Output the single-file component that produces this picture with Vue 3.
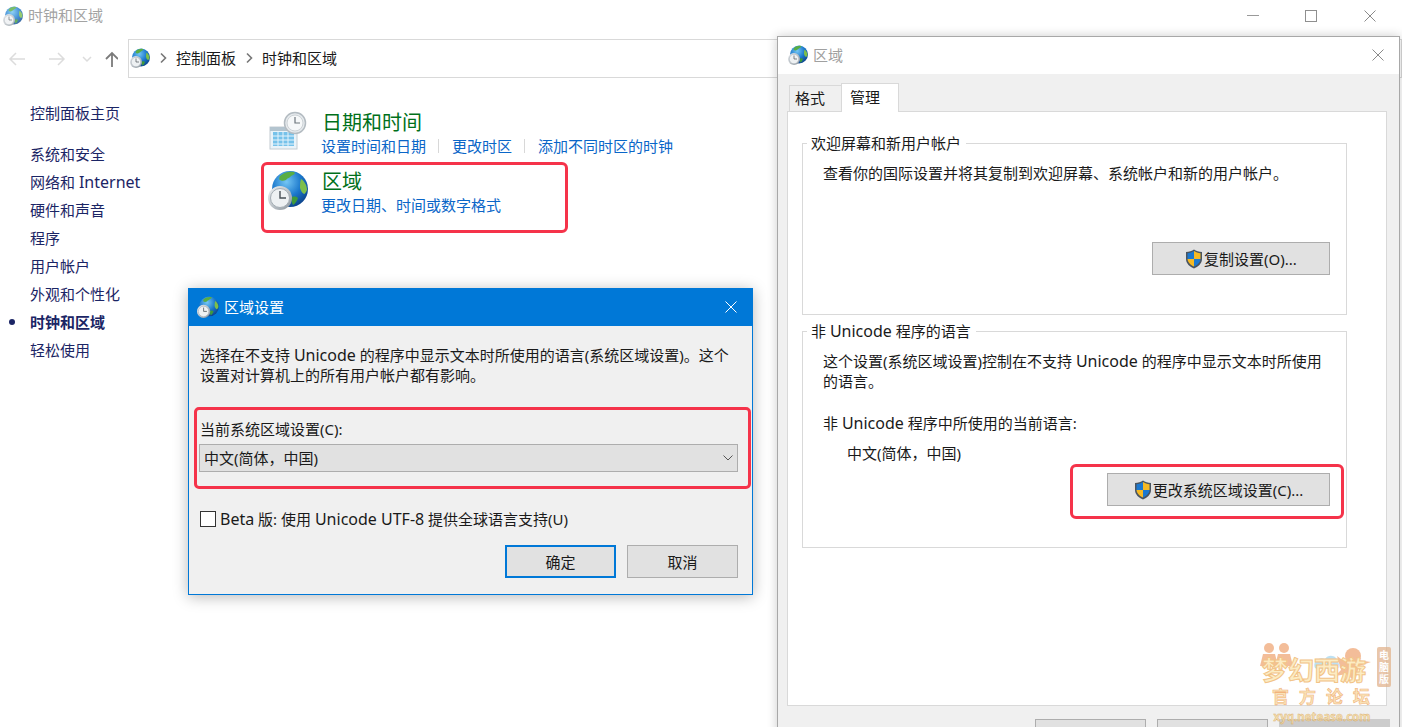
<template>
  <div class="desktop">
    <!-- shared icons -->
    <svg class="defs" width="0" height="0">
      <defs>
        <radialGradient id="sea" cx="40%" cy="30%" r="75%">
          <stop offset="0" stop-color="#74c6f4" />
          <stop offset="0.55" stop-color="#1b78cc" />
          <stop offset="1" stop-color="#0b3f86" />
        </radialGradient>
        <linearGradient id="rim" x1="0" y1="0" x2="1" y2="1">
          <stop offset="0" stop-color="#f2f4f6" />
          <stop offset="1" stop-color="#8a949c" />
        </linearGradient>
        <symbol id="globe" viewBox="0 0 40 40">
          <circle cx="22" cy="19" r="18" fill="url(#sea)" />
          <path d="M12 6c4-4 10-5 14-4 2 1 0 3-3 4-1 2-4 2-5 4-2 1-5 1-6 0-1 0-1-2 0-4z" fill="#58ad44" />
          <path d="M33 9c3 2 6 6 6 11-1 2-2 4-3 4-2-1-3-3-4-6 0-3 0-6 1-9z" fill="#7dbf4a" />
          <path d="M24 27c3-1 5 0 6 1-1 3-3 6-5 7-1-2-2-5-1-8z" fill="#3f9a3a" />
          <circle cx="12" cy="28" r="12" fill="url(#rim)" />
          <circle cx="12" cy="28" r="9.500" fill="#eef1f3" stroke="#a4adb4" />
          <path d="M12 21v7h6" fill="none" stroke="#4a5258" stroke-width="1.400" />
        </symbol>
        <symbol id="calendar" viewBox="0 0 40 40">
          <rect x="2" y="16" width="27" height="22" fill="#e9f3f9" stroke="#c3ccd2" />
          <rect x="2" y="16" width="27" height="4" fill="#b3c4cf" />
          <path d="M5 21h21v14H5z" fill="#76c2ea" />
          <path d="M5 25h21M5 29h21M5 33h21M10 21v14M15 21v14M20 21v14" stroke="#e4f3fb" stroke-width="1" />
          <circle cx="27" cy="12" r="10.500" fill="#e6eaed" stroke="#b3bbc1" stroke-width="1.500" />
          <circle cx="27" cy="12" r="8" fill="#f6f8f9" stroke="#ccd2d6" />
          <path d="M27 6v6h5" fill="none" stroke="#6d767c" stroke-width="1.200" />
        </symbol>
        <symbol id="shield" viewBox="0 0 18 20">
          <path d="M9 .5c2 1.600 5 2.500 8 2.500v7c0 4.500-4 8-8 9.500C5 18 1 14.500 1 10V3c3 0 6-.9 8-2.500z" fill="#4a5560" />
          <path d="M9 2v8H2.500V4.200C5 4 7.200 3.200 9 2z" fill="#1b78d0" />
          <path d="M9 2c1.800 1.200 4 2 6.500 2.200V10H9z" fill="#f6b922" />
          <path d="M9 10H2.500c.3 3.500 3.200 6 6.500 7.500z" fill="#f6b922" />
          <path d="M9 10h6.500c-.3 3.500-3.200 6-6.500 7.500z" fill="#1b78d0" />
        </symbol>
        <symbol id="cross" viewBox="0 0 12 12">
          <path d="M.5.5l11 11M11.500.5l-11 11" fill="none" stroke="currentColor" stroke-width="1" />
        </symbol>
        <symbol id="chevron" viewBox="0 0 8 12">
          <path d="M2 1.500L6.500 6 2 10.500" fill="none" stroke="#777" stroke-width="1.600" />
        </symbol>
      </defs>
    </svg>

    <!-- control panel window -->
    <div class="main-window">
      <div class="main-title">
        <svg class="title-icon faded"><use href="#globe" /></svg>
        <span class="title-text">时钟和区域</span>
        <div class="win-controls">
          <i class="minimize"></i>
          <i class="maximize"></i>
          <svg class="win-close"><use href="#cross" /></svg>
        </div>
      </div>

      <div class="nav-row">
        <svg class="nav-arrows" width="118" height="20" viewBox="0 0 118 20">
          <path d="M25 10H10M16 4l-6 6 6 6" fill="none" stroke="#dcdcdc" stroke-width="1.500" />
          <path d="M49 10h15M58 4l6 6-6 6" fill="none" stroke="#dcdcdc" stroke-width="1.500" />
          <path d="M83 8l4 4 4-4" fill="none" stroke="#dcdcdc" stroke-width="1.500" />
          <path d="M112 18V4M106 10l6-6 6 6" fill="none" stroke="#7b7b7b" stroke-width="1.800" />
        </svg>
        <div class="address">
          <svg class="title-icon"><use href="#globe" /></svg>
          <svg class="crumb-sep"><use href="#chevron" /></svg>
          <span>控制面板</span>
          <svg class="crumb-sep"><use href="#chevron" /></svg>
          <span>时钟和区域</span>
        </div>
      </div>

      <div class="main-body">
        <nav class="sidebar">
          <a class="home">控制面板主页</a>
          <a>系统和安全</a>
          <a>网络和 <span class="lat">Internet</span></a>
          <a>硬件和声音</a>
          <a>程序</a>
          <a>用户帐户</a>
          <a>外观和个性化</a>
          <a class="current">时钟和区域</a>
          <a>轻松使用</a>
        </nav>

        <div class="categories">
          <div class="category first">
            <svg class="cat-icon"><use href="#calendar" /></svg>
            <div>
              <h2>日期和时间</h2>
              <div class="links">
                <a>设置时间和日期</a><b></b><a>更改时区</a><b></b><a>添加不同时区的时钟</a>
              </div>
            </div>
          </div>
          <div class="category marked">
            <svg class="cat-icon"><use href="#globe" /></svg>
            <div>
              <h2>区域</h2>
              <div class="links"><a>更改日期、时间或数字格式</a></div>
            </div>
          </div>
        </div>
      </div>
    </div>

    <!-- 区域设置 dialog -->
    <div class="settings-dialog">
      <div class="settings-title">
        <svg class="small-icon"><use href="#globe" /></svg>
        <span>区域设置</span>
        <svg class="settings-close"><use href="#cross" /></svg>
      </div>
      <div class="settings-body">
        <div class="intro">
          <span class="ln">选择在不支持 <span class="lat">Unicode</span> 的程序中显示文本时所使用的语言(系统区域设置)。这个</span>
          <span class="ln">设置对计算机上的所有用户帐户都有影响。</span>
        </div>
        <div class="locale-box">
          <label class="ln">当前系统区域设置(C):</label>
          <div class="combo">
            <span>中文(简体，中国)</span>
            <svg width="10" height="6" viewBox="0 0 10 6"><path d="M.5.500L5 5 9.500.500" fill="none" stroke="#555" /></svg>
          </div>
        </div>
        <div class="beta-row">
          <span class="checkbox"></span>
          <span><span class="lat">Beta</span> 版: 使用 <span class="lat">Unicode UTF-8</span> 提供全球语言支持(U)</span>
        </div>
        <div class="dialog-buttons">
          <button class="btn default">确定</button>
          <button class="btn">取消</button>
        </div>
      </div>
    </div>

    <!-- 区域 window -->
    <div class="region-window">
      <div class="region-title">
        <svg class="small-icon"><use href="#globe" /></svg>
        <span>区域</span>
        <svg class="region-close"><use href="#cross" /></svg>
      </div>
      <div class="region-body">
        <div class="tabs">
          <span class="tab">格式</span>
          <span class="tab active">管理</span>
        </div>
        <div class="panel">
          <fieldset class="group welcome">
            <legend>欢迎屏幕和新用户帐户</legend>
            <span class="ln">查看你的国际设置并将其复制到欢迎屏幕、系统帐户和新的用户帐户。</span>
            <div class="group-action">
              <button class="btn shield-btn copy">
                <svg class="shield"><use href="#shield" /></svg>复制设置(O)...
              </button>
            </div>
          </fieldset>
          <fieldset class="group non-unicode">
            <legend>非 <span class="lat">Unicode</span> 程序的语言</legend>
            <span class="ln">这个设置(系统区域设置)控制在不支持 <span class="lat">Unicode</span> 的程序中显示文本时所使用</span>
            <span class="ln">的语言。</span>
            <span class="ln current-label">非 <span class="lat">Unicode</span> 程序中所使用的当前语言:</span>
            <span class="ln current-value">中文(简体，中国)</span>
            <div class="group-action marked-action">
              <button class="btn shield-btn change">
                <svg class="shield"><use href="#shield" /></svg>更改系统区域设置(C)...
              </button>
            </div>
          </fieldset>
        </div>
        <div class="footer-buttons">
          <button class="btn"></button>
          <button class="btn"></button>
          <button class="btn disabled"></button>
        </div>
      </div>
    </div>

    <!-- forum watermark -->
    <div class="watermark">
      <svg class="wm-art" width="118" height="44" viewBox="0 0 118 44">
        <g fill="#f0a878">
          <circle cx="12" cy="6" r="5" />
          <path d="M6 12h12l3 12H3z" />
          <circle cx="27" cy="6" r="5" />
          <path d="M21 12h12l3 12H18z" />
          <circle cx="96" cy="14" r="8" />
          <path d="M88 20l-8-6 4 14-6 6 12-2 8 8 4-16 12-4-14-2z" />
        </g>
        <path d="M58 26c-3-6 4-12 10-9 4-6 13-3 13 4 3 1 2 6-2 6H60z" fill="#a8d8f0" />
      </svg>
      <div class="wm-top">
        <span class="wm-name">梦幻西游</span>
        <span class="wm-tag">电脑版</span>
      </div>
      <div class="wm-sub">官方论坛</div>
      <div class="wm-url">xyq.netease.com</div>
    </div>
  </div>
</template>

<script setup>
</script>

<style>
html, body {
  margin: 0;
  overflow: hidden;
  background: #fff;
}
</style>

<style scoped>
.desktop {
  position: relative;
  width: 1402px;
  height: 727px;
  overflow: hidden;
  background: #fff;
  font-family: "Noto Sans", "Noto Sans CJK SC", sans-serif;
  font-size: 15px;
  line-height: 20px;
  color: #1a1a1a;
}
.defs {
  position: absolute;
}
.ln {
  display: block;
  height: 20px;
  white-space: nowrap;
}
.lat {
  font-size: 16px;
}

/* main window */
.main-title {
  display: flex;
  align-items: center;
  height: 31px;
  padding-left: 3px;
  gap: 5px;
  color: #a3a3a3;
}
.title-text {
  margin-bottom: 2px;
}
.title-icon {
  width: 20px;
  height: 20px;
  flex: none;
}
.faded {
  opacity: 0.8;
}
.win-controls {
  margin-left: auto;
  display: flex;
  align-items: center;
  height: 31px;
  color: #8a8a8a;
}
.minimize {
  width: 12px;
  height: 1px;
  background: #9a9a9a;
  margin-right: 46px;
}
.maximize {
  width: 10px;
  height: 10px;
  border: 1px solid #8f8f8f;
  margin-right: 47px;
}
.win-close {
  width: 12px;
  height: 12px;
  margin-right: 26px;
}
.nav-row {
  display: flex;
  align-items: center;
  margin-top: 8px;
  height: 39px;
}
.nav-arrows {
  flex: none;
  width: 118px;
  margin-right: 10px;
}
.address {
  flex: 1;
  height: 36px;
  display: flex;
  align-items: center;
  gap: 9px;
  padding: 0 0 1px 1px;
  border: 1px solid #d9d9d9;
  color: #1a1a1a;
}
.crumb-sep {
  width: 8px;
  height: 12px;
  flex: none;
}
.main-body {
  display: flex;
}
.sidebar {
  width: 261px;
  flex: none;
  box-sizing: border-box;
  padding: 21px 0 0 30px;
  display: flex;
  flex-direction: column;
  color: #1b2565;
}
.sidebar a {
  height: 28px;
  line-height: 28px;
  position: relative;
}
.sidebar .home {
  margin-bottom: 13px;
}
.sidebar .current {
  font-weight: 700;
}
.sidebar .current::before {
  content: "";
  position: absolute;
  left: -21px;
  top: 11px;
  width: 6px;
  height: 6px;
  border-radius: 50%;
  background: #1b2565;
}
.categories {
  padding-top: 33px;
}
.category {
  display: flex;
  gap: 13px;
  padding-left: 7px;
}
.category.first {
  height: 51px;
}
.cat-icon {
  width: 40px;
  height: 40px;
  flex: none;
}
.category h2 {
  margin: 0 0 0 1px;
  font-size: 20px;
  font-weight: 400;
  line-height: 24px;
  color: #00701a;
}
.links {
  display: flex;
  align-items: center;
  height: 22px;
  color: #0a66c8;
  line-height: 22px;
}
.links b {
  width: 1px;
  height: 14px;
  margin: 0 13px 0 12px;
  background: #d8d8d8;
}
.category.marked {
  width: 307px;
  height: 71px;
  box-sizing: border-box;
  padding: 5px 0 0 4px;
  border: 3px solid #f5334a;
  border-radius: 6px;
}

/* settings dialog */
.settings-dialog {
  position: absolute;
  left: 188px;
  top: 288px;
  width: 563px;
  height: 305px;
  border: 1px solid #0078d7;
  background: #f0f0f0;
  box-shadow: 0 2px 14px rgba(0, 0, 0, 0.28);
}
.settings-title {
  height: 36px;
  display: flex;
  align-items: center;
  padding: 0 0 1px 8px;
  gap: 5px;
  background: #0078d7;
  color: #fff;
}
.small-icon {
  width: 22px;
  height: 22px;
  flex: none;
}
.settings-close {
  width: 12px;
  height: 12px;
  margin-left: auto;
  margin-right: 15px;
  color: #fff;
}
.settings-body {
  padding-top: 19px;
}
.intro {
  margin-left: 11px;
}
.locale-box {
  margin: 22px 1px 0 5px;
  height: 82px;
  box-sizing: border-box;
  padding: 9px 10px 0 2px;
  border: 3px solid #f5334a;
  border-radius: 5px;
}
.locale-box label {
  height: 25px;
  margin-left: 1px;
}
.combo {
  height: 26px;
  padding: 0 4px 0 4px;
  display: flex;
  align-items: center;
  justify-content: space-between;
  border: 1px solid #adadad;
  background: #e1e1e1;
}
.beta-row {
  display: flex;
  align-items: center;
  gap: 4px;
  margin: 18px 0 0 11px;
  height: 24px;
}
.checkbox {
  width: 14px;
  height: 14px;
  border: 1px solid #333;
  background: #fff;
  flex: none;
}
.dialog-buttons {
  display: flex;
  justify-content: flex-end;
  gap: 11px;
  margin: 14px 14px 0 0;
}
.btn {
  width: 111px;
  height: 33px;
  box-sizing: border-box;
  border: 1px solid #adadad;
  background: #e1e1e1;
  font: inherit;
  color: #1a1a1a;
  padding: 0;
}
.btn.default {
  border: 2px solid #0078d7;
}

/* region window */
.region-window {
  position: absolute;
  left: 777px;
  top: 36px;
  width: 621px;
  height: 700px;
  border: 1px solid #a8a8a8;
  background: #f0f0f0;
  box-shadow: 0 0 10px rgba(0, 0, 0, 0.2);
}
.region-title {
  height: 35px;
  display: flex;
  align-items: center;
  gap: 5px;
  padding: 0 0 2px 10px;
  background: #fff;
  color: #a0a0a0;
}
.region-title .small-icon {
  width: 20px;
  height: 20px;
}
.region-close {
  width: 12px;
  height: 12px;
  margin-left: auto;
  margin-right: 15px;
  color: #8a8a8a;
}
.tabs {
  display: flex;
  align-items: flex-end;
  height: 37px;
  padding-left: 11px;
}
.tab {
  box-sizing: border-box;
  width: 53px;
  height: 26px;
  padding-left: 5px;
  border: 1px solid #d9d9d9;
  border-bottom: 0;
  background: #f0f0f0;
  line-height: 25px;
}
.tab.active {
  position: relative;
  width: 58px;
  height: 29px;
  padding-left: 8px;
  margin-left: -1px;
  margin-bottom: -1px;
  background: #fff;
  line-height: 26px;
}
.panel {
  box-sizing: border-box;
  width: 600px;
  height: 595px;
  margin-left: 9px;
  padding: 21px 0 0 14px;
  border: 1px solid #d9d9d9;
  background: #fff;
}
.group {
  box-sizing: border-box;
  width: 545px;
  margin: 0;
  min-width: 0;
  padding: 10px 16px 0 20px;
  border: 1px solid #d9d9d9;
}
.group legend {
  padding: 0 5px 0 4px;
  margin-left: -16px;
  line-height: 20px;
  height: 20px;
  white-space: nowrap;
}
.welcome {
  height: 182px;
}
.non-unicode {
  height: 227px;
  margin-top: 6px;
}
.group-action {
  display: flex;
  justify-content: flex-end;
}
.welcome .group-action {
  margin-top: 59px;
}
.current-label {
  margin-top: 22px;
}
.current-value {
  margin: 10px 0 0 24px;
}
.marked-action {
  box-sizing: border-box;
  width: 274px;
  height: 55px;
  margin: 1px -14px 0 auto;
  padding: 6px 11px 0 0;
  border: 3px solid #f5334a;
  border-radius: 6px;
}
.shield-btn {
  display: flex;
  align-items: center;
  justify-content: center;
}
.copy {
  width: 178px;
}
.change {
  width: 223px;
}
.shield {
  width: 18px;
  height: 20px;
  flex: none;
  margin-right: 1px;
}
.footer-buttons {
  display: flex;
  justify-content: flex-end;
  gap: 11px;
  margin: 13px 9px 0 0;
}
.btn.disabled {
  background: #ccc;
  border-color: #ccc;
}

/* watermark */
.watermark {
  position: absolute;
  left: 1255px;
  top: 645px;
  width: 138px;
  opacity: 0.75;
  font-weight: 700;
  text-align: center;
}
.wm-art {
  position: absolute;
  left: 2px;
  top: -3px;
}
.wm-top {
  position: relative;
  display: flex;
  align-items: center;
  height: 43px;
}
.wm-name {
  width: 118px;
  margin-top: 6px;
  font-size: 26px;
  line-height: 30px;
  white-space: nowrap;
  color: #fbe6b0;
  -webkit-text-stroke: 1px #eeb060;
}
.wm-tag {
  width: 14px;
  margin-left: 4px;
  padding: 2px 0;
  font-size: 10px;
  line-height: 12px;
  border-radius: 2px;
  background: #e2b48e;
  color: #fff;
}
.wm-sub {
  width: 100px;
  margin-left: 17px;
  text-align: left;
  font-size: 17px;
  line-height: 18px;
  letter-spacing: 10px;
  white-space: nowrap;
  color: #f7d9a0;
  -webkit-text-stroke: 0.6px #ee9a50;
}
.wm-url {
  width: 100px;
  margin: 4px 0 0 17px;
  font-size: 11.5px;
  line-height: 14px;
  color: #f4dba0;
  -webkit-text-stroke: 0.4px #d99a40;
}
</style>
